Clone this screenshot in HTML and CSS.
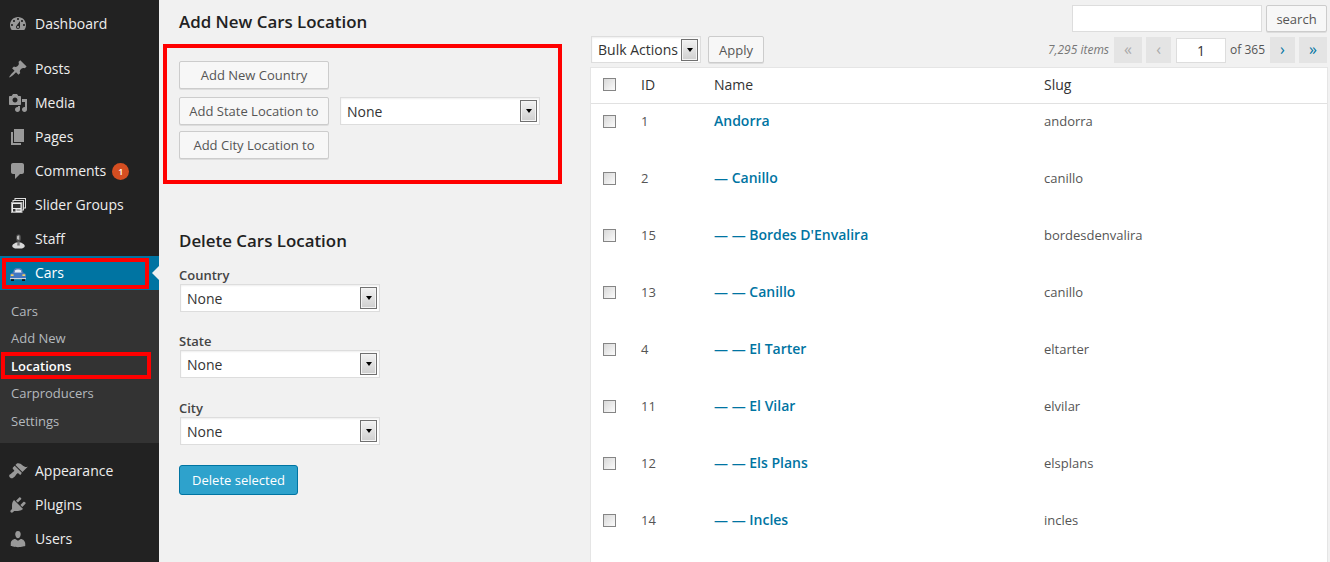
FILE: index.html
```html
<!DOCTYPE html>
<html>
<head>
  <meta charset="utf-8">
  <title>Cars Location</title>
  <link rel="stylesheet" href="styles.css">
</head>
<body>
<div class="page">
  <nav class="sidebar">
    <a class="menu-item first"><svg class="ico" viewBox="0 0 20 20"><path d="M3.76 16h12.48c1.1-1.37 1.76-3.11 1.76-5 0-4.42-3.58-8-8-8s-8 3.58-8 8c0 1.89.66 3.63 1.76 5zM10 4c.55 0 1 .45 1 1s-.45 1-1 1-1-.45-1-1 .45-1 1-1zM6 6c.55 0 1 .45 1 1s-.45 1-1 1-1-.45-1-1 .45-1 1-1zm8 0c.55 0 1 .45 1 1s-.45 1-1 1-1-.45-1-1 .45-1 1-1zm-5.37 5.55L12 7v6c0 1.1-.9 2-2 2s-2-.9-2-2c0-.57.24-1.08.63-1.45zM4 10c.55 0 1 .45 1 1s-.45 1-1 1-1-.45-1-1 .45-1 1-1zm12 0c.55 0 1 .45 1 1s-.45 1-1 1-1-.45-1-1 .45-1 1-1zm-5 3c0-.55-.45-1-1-1s-1 .45-1 1 .45 1 1 1 1-.45 1-1z"/></svg>Dashboard</a>
    <a class="menu-item sep"><svg class="ico" viewBox="0 0 20 20"><path d="M10.44 3.02l1.82-1.82 6.36 6.35-1.83 1.82c-1.05-.68-2.48-.57-3.41.36l-.75.75c-.92.93-1.04 2.35-.35 3.41l-1.83 1.82-2.41-2.41-2.8 2.79c-.42.42-3.38 2.71-3.8 2.29s1.86-3.39 2.28-3.81l2.79-2.79L4.1 9.36l1.83-1.82c1.05.69 2.48.57 3.4-.36l.75-.75c.93-.92 1.05-2.35.36-3.41z"/></svg>Posts</a>
    <a class="menu-item"><svg class="ico" viewBox="0 0 20 20"><path d="M13 11V4c0-.55-.45-1-1-1h-1.67L9 1H5L3.67 3H2c-.55 0-1 .45-1 1v7c0 .55.45 1 1 1h10c.55 0 1-.45 1-1zM7 4.5c1.38 0 2.5 1.12 2.5 2.5S8.38 9.5 7 9.5 4.5 8.38 4.5 7 5.62 4.5 7 4.5zM14 6h5v10.5c0 1.38-1.12 2.5-2.5 2.5S14 17.88 14 16.5s1.12-2.5 2.5-2.5c.17 0 .34.02.5.05V9h-3V6zm-4 8.05V13h2v3.5c0 1.38-1.12 2.5-2.5 2.5S7 17.88 7 16.5 8.12 14 9.5 14c.17 0 .34.02.5.05z"/></svg>Media</a>
    <a class="menu-item"><svg class="ico" viewBox="0 0 20 20"><path d="M6 15V2h10v13H6zm-1 1h8v2H3V5h2v11z"/></svg>Pages</a>
    <a class="menu-item"><svg class="ico" viewBox="0 0 20 20"><path d="M5 2h9c1.1 0 2 .9 2 2v7c0 1.1-.9 2-2 2h-2l-5 5v-5H5c-1.1 0-2-.9-2-2V4c0-1.1.9-2 2-2z"/></svg>Comments<span class="badge">1</span></a>
    <a class="menu-item"><svg class="ico" viewBox="0 0 20 20">
      <rect x="7" y="3.500" width="10.500" height="9.500" fill="#222" stroke="#ddd"/>
      <rect x="5" y="5.500" width="10.500" height="9.500" fill="#222" stroke="#ddd"/>
      <rect x="3.500" y="7.500" width="10.500" height="10" fill="#eee" stroke="#aaa"/>
      <rect x="5" y="9" width="7.500" height="4" fill="#333"/>
      <rect x="5" y="14" width="2.500" height="2.500" fill="#333"/>
      <rect x="8.500" y="14.500" width="4" height="1" fill="#555"/>
    </svg>Slider Groups</a>
    <a class="menu-item"><svg class="ico" viewBox="0 0 20 20">
      <path d="M5 18.500c-1-.8-1-2.300.2-3.200L8 13.500h5l2.800 1.800c1.200.9 1.200 2.400.2 3.200-.7.5-2 1-3 1H8c-1 0-2.300-.5-3-1z" fill="#d8d8d8"/>
      <ellipse cx="10.500" cy="9" rx="2.600" ry="3.800" fill="#4a4a4a"/>
      <path d="M9 7.500c.5-1 1.500-1.300 2.500-.8-.3 1-.3 2.500 0 3.800-1 .5-2 .2-2.500-.6z" fill="#bbb"/>
      <path d="M9.500 12.500h2l.3 4h-2.600z" fill="#777"/>
    </svg>Staff</a>
    <a class="menu-item current"><svg class="ico" viewBox="0 0 20 20">
      <path d="M4.500 10l1.600-3.500C6.700 5.400 8 5 10 5s3.300.4 3.900 1.500L15.500 10z" fill="#4f79b8"/>
      <path d="M6.300 9.800l1-2.500c.3-.6 1.200-.9 2.700-.9s2.400.3 2.700.9l1 2.500z" fill="#e3ebf5"/>
      <path d="M2 12c0-1.300 1.200-2.300 2.800-2.300h10.400c1.600 0 2.800 1 2.800 2.300v3.500H2z" fill="#4478c2"/>
      <rect x="2.800" y="11.300" width="2.800" height="1.700" fill="#f4d35e"/>
      <rect x="14.400" y="11.300" width="2.800" height="1.700" fill="#f4d35e"/>
      <rect x="2" y="15" width="16" height="1.200" fill="#cfd4da"/>
      <rect x="3" y="16.200" width="3" height="1.800" fill="#111"/>
      <rect x="14" y="16.200" width="3" height="1.800" fill="#111"/>
    </svg>Cars<span class="red-mark"></span><span class="pointer"></span></a>
    <div class="submenu">
      <a class="sub-item">Cars</a>
      <a class="sub-item">Add New</a>
      <a class="sub-item active">Locations<span class="red-mark"></span></a>
      <a class="sub-item">Carproducers</a>
      <a class="sub-item">Settings</a>
    </div>
    <a class="menu-item sep"><svg class="ico" viewBox="0 0 20 20"><path d="M14.480 11.060L7.410 3.990l1.500-1.500c.5-.56 2.300-.47 3.510.32 1.210.8 1.430 1.280 2.910 2.100 1.180.64 2.450 1.260 4.450.85zm-.71.71L6.700 4.700 4.930 6.470c-.39.39-.39 1.020 0 1.410l1.060 1.060c.39.39.39 1.030 0 1.420-.6.6-1.430 1.110-2.210 1.690-.35.26-.7.53-1.010.84C1.430 13.230.4 14.800 2.030 16.430s3.200.6 4.530-.74c.31-.31.58-.66.85-1.020.57-.78 1.080-1.610 1.690-2.210.39-.39 1.020-.39 1.410 0l1.060 1.060c.39.39 1.020.39 1.410 0z"/></svg>Appearance</a>
    <a class="menu-item"><svg class="ico" viewBox="0 0 20 20"><path d="M13.110 4.360L9.870 7.600 8 5.730l3.240-3.240c.35-.34 1.050-.2 1.560.32.52.51.66 1.210.31 1.550zm-8 1.770l.91-1.120 9.010 9.010-1.190.84c-.71.71-2.630 1.160-3.820 1.160H6.140L4.900 17.260c-.59.59-1.540.59-2.120 0-.59-.58-.59-1.530 0-2.120l1.240-1.240v-3.880c0-1.130.4-3.190 1.090-3.890zm7.260 3.970l3.240-3.240c.34-.35 1.040-.21 1.550.31.52.51.66 1.210.31 1.550l-3.240 3.250z"/></svg>Plugins</a>
    <a class="menu-item"><svg class="ico" viewBox="0 0 20 20"><path d="M10 9.250c-2.270 0-2.730-3.440-2.730-3.440C7 4.020 7.820 2 9.970 2c2.160 0 2.980 2.020 2.710 3.810 0 0-.41 3.440-2.680 3.440zm0 2.570L12.720 10c2.390 0 4.520 2.330 4.520 4.530v2.490s-3.650 1.130-7.240 1.130c-3.650 0-7.240-1.130-7.240-1.130v-2.490c0-2.250 1.940-4.480 4.470-4.480z"/></svg>Users</a>
  </nav>

  <main class="content">
    <section class="col-left">
      <h3 class="title">Add New Cars Location</h3>
      <div class="add-box">
        <div class="add-row"><button class="btn wide">Add New Country</button></div>
        <div class="add-row second">
          <button class="btn wide">Add State Location to</button>
          <div class="select state-select"><span class="select-text">None</span><i class="select-arrow"></i></div>
        </div>
        <div class="add-row third"><button class="btn wide">Add City Location to</button></div>
      </div>

      <h3 class="title delete-title">Delete Cars Location</h3>
      <label class="field-label first-label">Country</label>
      <div class="select field-select"><span class="select-text">None</span><i class="select-arrow"></i></div>
      <label class="field-label">State</label>
      <div class="select field-select"><span class="select-text">None</span><i class="select-arrow"></i></div>
      <label class="field-label city">City</label>
      <div class="select field-select"><span class="select-text">None</span><i class="select-arrow"></i></div>
      <button class="btn-primary">Delete selected</button>
    </section>

    <section class="col-right">
      <div class="search-row">
        <input class="search-input" type="text">
        <button class="btn search-btn">search</button>
      </div>
      <div class="tablenav">
        <div class="select bulk-select"><span class="select-text">Bulk Actions</span><i class="select-arrow"></i></div>
        <button class="btn apply-btn">Apply</button>
        <div class="pagination">
          <span class="items">7,295 items</span>
          <span class="page-btn off wide-page">«</span>
          <span class="page-btn off">‹</span>
          <input class="page-input" type="text" value="1">
          <span class="page-of">of 365</span>
          <span class="page-btn">›</span>
          <span class="page-btn wide-page last">»</span>
        </div>
      </div>
      <table class="list">
        <colgroup><col class="c-check"><col class="c-id"><col class="c-name"><col></colgroup>
        <thead>
          <tr><th><span class="check"></span></th><th>ID</th><th>Name</th><th>Slug</th></tr>
        </thead>
        <tbody>
          <tr><td><span class="check"></span></td><td>1</td><td><a class="name">Andorra</a></td><td>andorra</td></tr>
          <tr><td><span class="check"></span></td><td>2</td><td><a class="name">— Canillo</a></td><td>canillo</td></tr>
          <tr><td><span class="check"></span></td><td>15</td><td><a class="name">— — Bordes D'Envalira</a></td><td>bordesdenvalira</td></tr>
          <tr><td><span class="check"></span></td><td>13</td><td><a class="name">— — Canillo</a></td><td>canillo</td></tr>
          <tr><td><span class="check"></span></td><td>4</td><td><a class="name">— — El Tarter</a></td><td>eltarter</td></tr>
          <tr><td><span class="check"></span></td><td>11</td><td><a class="name">— — El Vilar</a></td><td>elvilar</td></tr>
          <tr><td><span class="check"></span></td><td>12</td><td><a class="name">— — Els Plans</a></td><td>elsplans</td></tr>
          <tr><td><span class="check"></span></td><td>14</td><td><a class="name">— — Incles</a></td><td>incles</td></tr>
          <tr><td></td><td></td><td></td><td></td></tr>
        </tbody>
      </table>
    </section>
  </main>
</div>
</body>
</html>
```

FILE: styles.css
```css
html, body {
  margin: 0;
  height: 562px;
  overflow: hidden;
}

body {
  background: #f1f1f1;
  font-family: "Open Sans", sans-serif;
  font-size: 13px;
  color: #444;
}

.page {
  display: flex;
  height: 562px;
  overflow: hidden;
}

/* sidebar */
.sidebar {
  width: 159px;
  flex: none;
  background: #222;
  padding-top: 7px;
  box-sizing: border-box;
}

.menu-item {
  position: relative;
  display: flex;
  align-items: center;
  height: 34px;
  padding-bottom: 2px;
  box-sizing: border-box;
  font-size: 14px;
  color: #eee;
}

.menu-item.sep {
  margin-top: 11px;
}

.ico {
  width: 20px;
  height: 20px;
  margin: 2px 7px 0 8px;
  flex: none;
  fill: #999;
}

.menu-item.current {
  background: #0074a2;
  color: #fff;
}

.badge {
  width: 17px;
  height: 17px;
  margin: 2px 0 0 6px;
  border-radius: 50%;
  background: #d54e21;
  color: #fff;
  font-size: 9px;
  font-weight: 600;
  line-height: 17px;
  text-align: center;
}

.pointer {
  position: absolute;
  right: 0;
  top: 10px;
  border: 7px solid transparent;
  border-right-color: #f1f1f1;
  border-left-width: 0;
}

.red-mark {
  position: absolute;
  border: 4px solid #f00;
  box-sizing: border-box;
}

.current .red-mark {
  left: 2px;
  top: 2px;
  width: 147px;
  height: 31px;
}

.submenu {
  background: #333;
  height: 153px;
  padding-top: 7.75px;
  box-sizing: border-box;
}

.sub-item {
  position: relative;
  display: block;
  height: 27.5px;
  line-height: 27.5px;
  padding-left: 11px;
  color: #b4b9be;
}

.sub-item.active {
  color: #fff;
  font-weight: 600;
}

.active .red-mark {
  left: 1px;
  top: -1px;
  width: 150px;
  height: 27px;
}

/* main */
.content {
  flex: 1;
  display: flex;
  min-width: 0;
}

.col-left {
  width: 432px;
  flex: none;
  padding-left: 4px;
  box-sizing: border-box;
}

.title {
  margin: 10px 0 11px 16px;
  font-size: 16.9px;
  line-height: 23px;
  font-weight: 600;
  color: #222;
}

.add-box {
  width: 399px;
  height: 140px;
  border: 4px solid #f00;
  box-sizing: border-box;
  padding: 13px 12px 12px;
}

.add-row {
  display: flex;
  align-items: center;
}

.add-row.second {
  margin-top: 7px;
}

.add-row.third {
  margin-top: 6px;
}

.btn {
  height: 28px;
  padding: 0 10px;
  border: 1px solid #ccc;
  border-radius: 2px;
  background: #f7f7f7;
  box-shadow: 0 1px 0 #ddd;
  color: #555;
  font-family: "Open Sans", sans-serif;
  font-size: 13px;
  white-space: nowrap;
}

.btn.wide {
  width: 150px;
  padding: 0;
}

.select {
  display: flex;
  align-items: center;
  height: 28px;
  box-sizing: border-box;
  border: 1px solid #ddd;
  background: #fff;
  box-shadow: inset 0 1px 2px rgba(0, 0, 0, .07);
  color: #333;
  font-size: 14px;
}

.select-text {
  flex: 1;
  padding-left: 6px;
}

.select-arrow {
  width: 17px;
  height: 22px;
  margin-right: 2px;
  box-sizing: border-box;
  border: 1px solid #707070;
  box-shadow: inset 0 0 0 1px #f4f4f4;
  background: linear-gradient(#f2f2f2, #cfcfcf);
  display: flex;
  align-items: center;
  justify-content: center;
}

.select-arrow::after {
  content: "";
  border: 3.5px solid transparent;
  border-top: 4px solid #000;
  border-bottom-width: 0;
}

.state-select {
  width: 200px;
  margin-left: 11px;
  margin-top: 1px;
}

.title.delete-title {
  margin: 45px 0 0 16px;
}

.field-label {
  display: block;
  margin: 20px 0 0 16px;
  line-height: 18px;
  font-weight: 600;
  color: #444;
}

.field-label.first-label {
  margin-top: 14px;
}

.field-label.city {
  margin-top: 21px;
}

.field-select {
  width: 200px;
  margin-left: 17px;
}

.btn-primary {
  display: block;
  width: 119px;
  height: 30px;
  margin: 20px 0 0 16px;
  padding: 0;
  border: 1px solid #0074a2;
  border-radius: 3px;
  background: #2ea2cc;
  color: #fff;
  font-family: "Open Sans", sans-serif;
  font-size: 13px;
}

.col-right {
  width: 736px;
  flex: none;
  padding-top: 5px;
}

.search-row {
  display: flex;
  justify-content: flex-end;
  gap: 4px;
}

.search-input {
  width: 190px;
  height: 27px;
  box-sizing: border-box;
  border: 1px solid #ddd;
  background: #fff;
  padding: 0;
}

.search-btn {
  width: 61px;
  height: 27px;
  padding: 0;
}

.tablenav {
  display: flex;
  align-items: center;
  height: 27px;
  margin-top: 4px;
}

.bulk-select {
  width: 110px;
  height: 27px;
}

.apply-btn {
  width: 56px;
  height: 27px;
  margin-left: 7px;
  padding: 0;
}

.pagination {
  margin-left: auto;
  display: flex;
  align-items: center;
}

.items {
  font-style: italic;
  font-size: 12px;
  color: #777;
  margin-right: 5px;
}

.page-btn {
  width: 25px;
  height: 26px;
  margin-right: 4px;
  background: #e4e4e4;
  color: #0074a2;
  font-size: 16px;
  line-height: 24px;
  text-align: center;
}

.page-btn.wide-page {
  width: 28px;
}

.page-btn.last {
  margin-right: 0;
}

.page-btn.off {
  color: #aaa;
}

.page-input {
  width: 50px;
  height: 25px;
  box-sizing: border-box;
  margin: 2px 0 0 1px;
  border: 1px solid #ddd;
  background: #fff;
  padding: 0;
  color: #333;
  font-family: "Open Sans", sans-serif;
  font-size: 14px;
  text-align: center;
}

.page-of {
  margin: 0 5px 0 4px;
  font-size: 12px;
  color: #555;
}

/* table */
.list {
  width: 736px;
  margin-top: 4px;
  border-collapse: collapse;
  table-layout: fixed;
  background: #fff;
  border-top: 1px solid #e5e5e5;
  box-shadow: -1px 0 #e5e5e5, 1px 0 #e5e5e5;
}

.c-check { width: 40px; }
.c-id { width: 73px; }
.c-name { width: 330px; }

.list th {
  height: 36px;
  padding: 0 10px 2px;
  box-sizing: border-box;
  border-bottom: 1px solid #e1e1e1;
  font-size: 14px;
  font-weight: 400;
  text-align: left;
  color: #333;
}

.list td {
  height: 57px;
  padding: 8px 10px 0;
  box-sizing: border-box;
  vertical-align: top;
  line-height: 18px;
  color: #555;
}

.check {
  display: block;
  width: 13px;
  height: 13px;
  margin-left: 2px;
  box-sizing: border-box;
  border: 1px solid #858585;
  background: linear-gradient(135deg, #d8d8d8, #fbfbfb);
}

.list td .check {
  margin-top: 3px;
}

.name {
  font-size: 14px;
  font-weight: 600;
  color: #0074a2;
}
```
